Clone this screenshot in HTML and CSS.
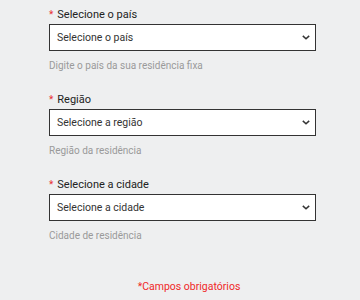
FILE: index.html
```html
<!DOCTYPE html>
<html lang="pt">
<head>
<meta charset="utf-8">
<link rel="stylesheet" href="styles.css">
</head>
<body>
<form class="form">
  <div class="field">
    <label class="label"><span class="req">*</span>Selecione o país</label>
    <div class="select"><span>Selecione o país</span><svg class="chev" viewBox="0 0 10 6" width="8" height="5"><path d="M1 1 L5 4.5 L9 1" fill="none" stroke="#333" stroke-width="1.9"/></svg></div>
    <div class="help">Digite o país da sua residência fixa</div>
  </div>
  <div class="field">
    <label class="label"><span class="req">*</span>Região</label>
    <div class="select"><span>Selecione a região</span><svg class="chev" viewBox="0 0 10 6" width="8" height="5"><path d="M1 1 L5 4.5 L9 1" fill="none" stroke="#333" stroke-width="1.9"/></svg></div>
    <div class="help">Região da residência</div>
  </div>
  <div class="field">
    <label class="label"><span class="req">*</span>Selecione a cidade</label>
    <div class="select"><span>Selecione a cidade</span><svg class="chev" viewBox="0 0 10 6" width="8" height="5"><path d="M1 1 L5 4.5 L9 1" fill="none" stroke="#333" stroke-width="1.9"/></svg></div>
    <div class="help">Cidade de residência</div>
  </div>
  <div class="footer">*Campos obrigatórios</div>
</form>
</body>
</html>
```
FILE: styles.css
```css
html, body {
  margin: 0;
  padding: 0;
  background: #eeeff0;
  font-family: Roboto, "Liberation Sans", sans-serif;
}
.form {
  padding: 8px 0 0 49px;
  width: 267px;
  display: flex;
  flex-direction: column;
  gap: 20px;
}
.field {
  display: flex;
  flex-direction: column;
}
.label {
  font-size: 11px;
  line-height: 14px;
  color: #222;
  margin-bottom: 2px;
}
.req {
  color: #e83030;
  font-size: 10px;
  margin-right: 4px;
}
.select {
  height: 27px;
  box-sizing: border-box;
  border: 1px solid #333;
  background: #fff;
  display: flex;
  align-items: center;
  justify-content: space-between;
  padding: 0 5px 0 7px;
  font-size: 10.5px;
  color: #333;
}
.chev {
  display: block;
}
.help {
  margin-top: 8px;
  font-size: 10px;
  line-height: 14px;
  color: #9a9a9a;
}
.footer {
  margin-top: 17px;
  padding-left: 13px;
  text-align: center;
  font-size: 10.5px;
  line-height: 14px;
  color: #f02828;
}
```
